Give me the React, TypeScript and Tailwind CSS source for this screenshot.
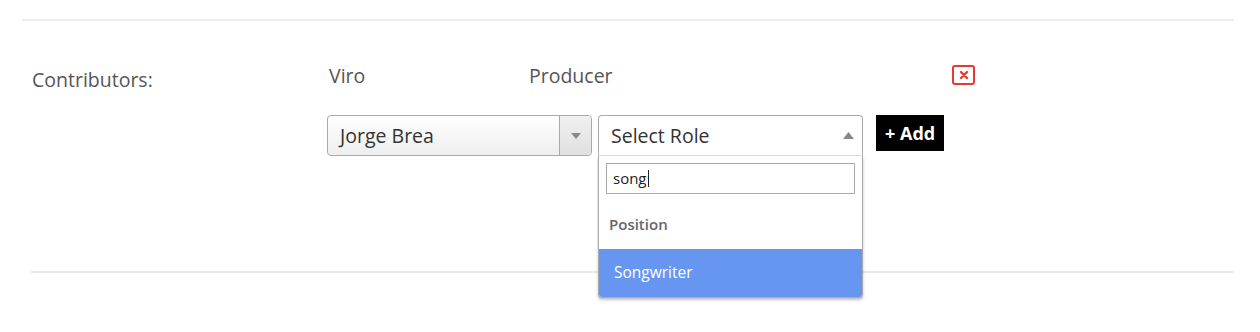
import React from "react";

const ContributorsRow = () => {
  return (
    <div className="flex">
      <div className="w-[327px] shrink-0 pl-[32px] pt-[44px] text-[19.5px] text-[#555]">
        Contributors:
      </div>
      <div className="flex-1">
        {/* existing contributor */}
        <div className="flex items-center h-[40px] mt-[35px] text-[19.5px] text-[#555]">
          <span className="w-[202px] pl-[2px]">Viro</span>
          <span className="w-[423px]">Producer</span>
          <button
            type="button"
            className="flex items-center justify-center w-[23px] h-[20px] border-2 border-[#e8392f] rounded-[3px] bg-white -mt-[2px]"
          >
            <svg width="10" height="10" viewBox="0 0 10 10">
              <path d="M2 2L8 8M8 2L2 8" stroke="#e8392f" strokeWidth="2.4" strokeLinecap="round" />
            </svg>
          </button>
        </div>

        {/* new contributor */}
        <div className="flex items-start mt-[19px] h-[156px]">
          <div className="flex w-[265px] h-[41px] border border-[#aaa] rounded-[4px] bg-gradient-to-b from-white to-[#eeeeee] overflow-hidden">
            <div className="flex-1 flex items-center pl-[12px] text-[19.5px] text-[#333]">Jorge Brea</div>
            <div className="w-[32px] flex items-center justify-center border-l border-[#aaa] bg-gradient-to-b from-[#f0f0f0] to-[#e0e0e0]">
              <svg width="10" height="6" viewBox="0 0 10 6">
                <path d="M0 0H10L5 6Z" fill="#888" />
              </svg>
            </div>
          </div>

          <div className="relative ml-[6px] w-[265px] z-10">
            <div className="flex items-center justify-between h-[41px] border border-[#aaa] border-b-[#ddd] rounded-t-[4px] bg-white pl-[12px] pr-[8px] text-[19.5px] text-[#333]">
              <span>Select Role</span>
              <svg width="11" height="7" viewBox="0 0 11 7">
                <path d="M0 7H11L5.5 0Z" fill="#888" />
              </svg>
            </div>
            <div className="border border-t-0 border-[#aaa] rounded-b-[4px] bg-white shadow-[0_2px_3px_rgba(0,0,0,0.25)] overflow-hidden">
              <div className="px-[7px] pt-[7px] pb-[5px]">
                <div className="h-[31px] border border-[#aaa] flex items-center px-[6px] text-[15px] text-[#222]">
                  song<span className="inline-block w-px h-[17px] bg-[#222] ml-[1px]" />
                </div>
              </div>
              <div className="h-[50px] flex items-center pl-[10px] text-[15px] font-semibold text-[#666]">
                Position
              </div>
              <div className="h-[48px] flex items-center pl-[15px] text-[15.5px] text-white bg-[#6796f1]">
                Songwriter
              </div>
            </div>
          </div>

          <button
            type="button"
            className="ml-[13px] h-[36px] px-[9px] bg-black text-white text-[18px] font-bold"
          >
            + Add
          </button>
        </div>
      </div>
    </div>
  );
};

export default function App() {
  return (
    <div className="w-[1260px] h-[332px] bg-white font-['Open_Sans',sans-serif] overflow-hidden">
      <div className="pt-[19px]">
        <div className="ml-[22px] w-[1212px] h-[2px] bg-[#ececec]" />
      </div>
      <ContributorsRow />
      <div className="ml-[31px] w-[1203px] h-[2px] bg-[#e8e8e8]" />
    </div>
  );
}
